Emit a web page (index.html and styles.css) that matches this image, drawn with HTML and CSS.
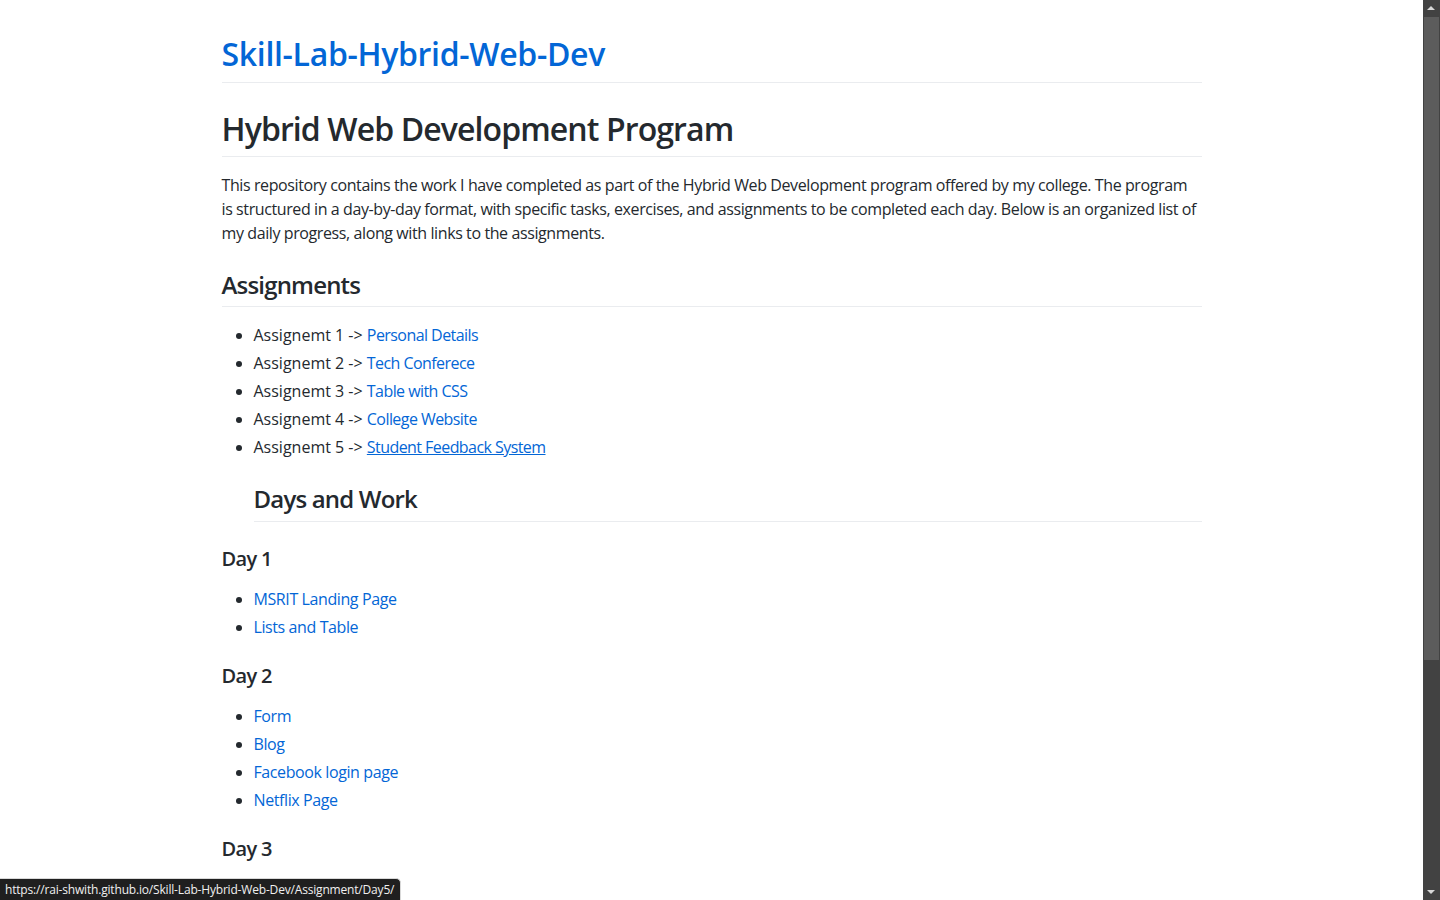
FILE: index.html
```html
<!DOCTYPE html>
<html lang="en">
<head>
<meta charset="utf-8">
<title>Skill-Lab-Hybrid-Web-Dev</title>
<link rel="stylesheet" href="styles.css">
</head>
<body>
<div class="page">
  <div class="container markdown-body">
    <h1 class="site-title"><a href="#">Skill-Lab-Hybrid-Web-Dev</a></h1>

    <h1>Hybrid Web Development Program</h1>
    <p>This repository contains the work I have completed as part of the Hybrid Web Development program offered by my college. The program is structured in a day-by-day format, with specific tasks, exercises, and assignments to be completed each day. Below is an organized list of my daily progress, along with links to the assignments.</p>

    <h2>Assignments</h2>
    <ul class="assignments">
      <li>Assignemt 1 -&gt; <a href="#">Personal Details</a></li>
      <li>Assignemt 2 -&gt; <a href="#">Tech Conferece</a></li>
      <li>Assignemt 3 -&gt; <a href="#">Table with CSS</a></li>
      <li>Assignemt 4 -&gt; <a href="#">College Website</a></li>
      <li>Assignemt 5 -&gt; <a href="#" class="hover">Student Feedback System</a></li>
    </ul>
    <div class="indented">
      <h2>Days and Work</h2>
    </div>

    <h3>Day 1</h3>
    <ul>
      <li><a href="#">MSRIT Landing Page</a></li>
      <li><a href="#">Lists and Table</a></li>
    </ul>

    <h3>Day 2</h3>
    <ul>
      <li><a href="#">Form</a></li>
      <li><a href="#">Blog</a></li>
      <li><a href="#">Facebook login page</a></li>
      <li><a href="#">Netflix Page</a></li>
    </ul>

    <h3>Day 3</h3>
  </div>
</div>

<div class="status-bubble">https://rai-shwith.github.io/Skill-Lab-Hybrid-Web-Dev/Assignment/Day5/</div>

<div class="scrollbar">
  <div class="sb-arrow sb-up"></div>
  <div class="sb-thumb"></div>
  <div class="sb-track"></div>
  <div class="sb-arrow sb-down"></div>
</div>
</body>
</html>
```

FILE: styles.css
```css
html, body {
  margin: 0;
  padding: 0;
  height: 100%;
  overflow: hidden;
  background: #fff;
}

body {
  font-family: "Open Sans", "Noto Sans", "Liberation Sans", sans-serif;
  font-size: 16px;
  line-height: 1.5;
  color: #24292e;
  letter-spacing: -0.025em;
}

.page {
  margin-right: 17px;
}

.container {
  max-width: 1012px;
  margin: 32px auto;
  padding: 0 16px;
  box-sizing: border-box;
}

.markdown-body a {
  color: #0366d6;
  text-decoration: none;
}

.markdown-body a.hover {
  text-decoration: underline;
}

.markdown-body h1,
.markdown-body h2,
.markdown-body h3 {
  margin-top: 24px;
  margin-bottom: 16px;
  font-weight: 600;
  line-height: 1.25;
  letter-spacing: -0.034em;
}

.markdown-body h1 {
  font-size: 32px;
  padding-top: 2px;
  padding-bottom: 7.6px;
  border-bottom: 1px solid #eaecef;
  letter-spacing: -0.028em;
}

.markdown-body h1.site-title {
  margin-top: 0;
  letter-spacing: -0.01em;
}

.markdown-body h2 {
  font-size: 24px;
  padding-top: 1px;
  padding-bottom: 6.2px;
  border-bottom: 1px solid #eaecef;
}

.markdown-body h3 {
  font-size: 20px;
}

.markdown-body p {
  margin-top: 0;
  margin-bottom: 16px;
}

.markdown-body ul {
  margin-top: 0;
  margin-bottom: 16px;
  padding-left: 32px;
}

.markdown-body li + li {
  margin-top: 4px;
}

.assignments li {
  letter-spacing: 0;
}

.assignments li a {
  letter-spacing: -0.035em;
}

.indented {
  padding-left: 32px;
}

.status-bubble {
  position: fixed;
  left: 0;
  bottom: 0;
  height: 21px;
  line-height: 21px;
  padding: 0 6px 0 5px;
  background: #1f1f1f;
  color: #f0f0f0;
  font-family: "Open Sans", "Noto Sans", sans-serif;
  font-size: 12px;
  letter-spacing: -0.015em;
  border-top: 1px solid #d9d9d9;
  border-right: 1px solid #d9d9d9;
  border-top-right-radius: 5px;
  white-space: nowrap;
}

.scrollbar {
  position: fixed;
  top: 0;
  right: 0;
  width: 17px;
  height: 100%;
  display: flex;
  flex-direction: column;
  background: #424242;
}

.sb-arrow {
  height: 17px;
  flex: none;
  position: relative;
}

.sb-arrow::after {
  content: "";
  position: absolute;
  left: 4px;
  width: 0;
  height: 0;
  border-left: 4px solid transparent;
  border-right: 4px solid transparent;
}

.sb-up::after {
  top: 6px;
  border-bottom: 4px solid #d8d8d8;
}

.sb-down::after {
  top: 7px;
  border-top: 4px solid #d8d8d8;
}

.sb-thumb {
  height: 643px;
  flex: none;
  margin: 0 1px;
  background: #5c5c5c;
}

.sb-track {
  flex: 1;
}
```
